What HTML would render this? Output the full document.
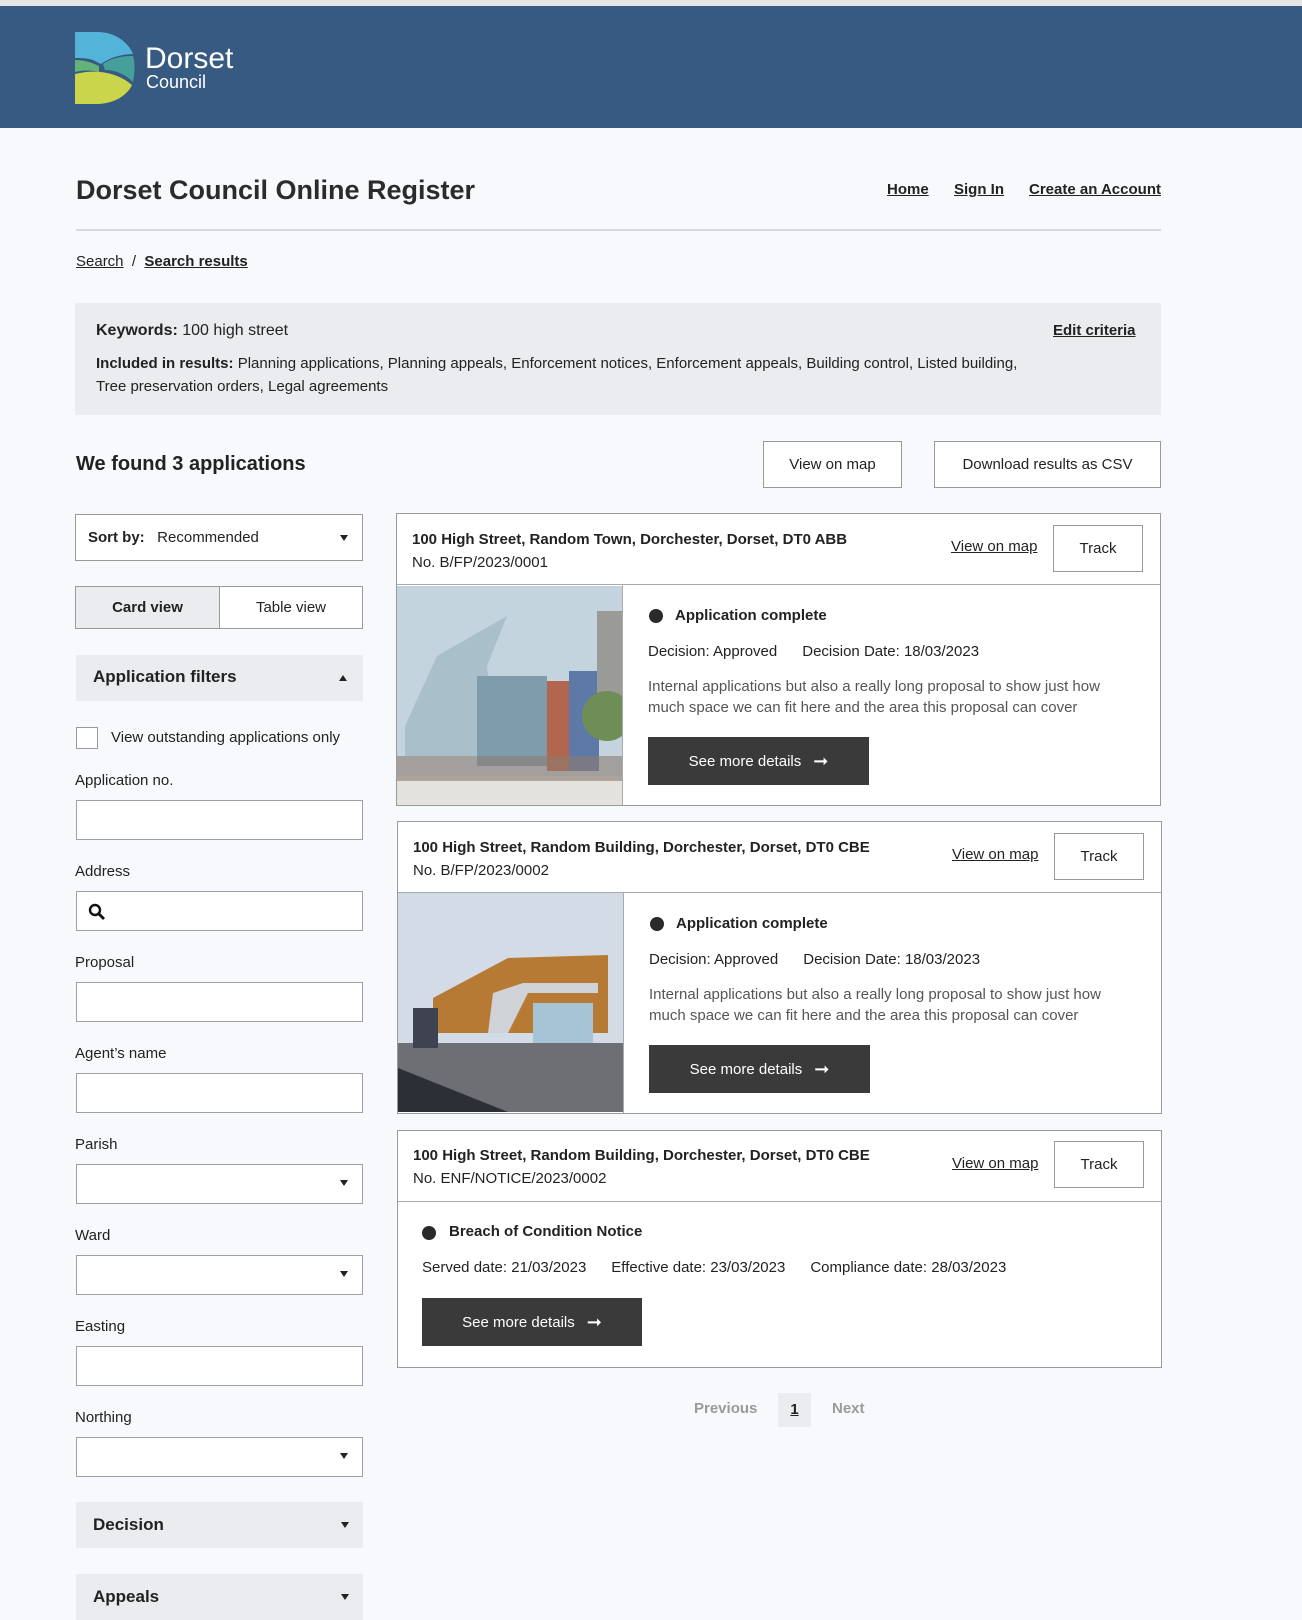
<!DOCTYPE html>
<html><head><meta charset="utf-8"><style>
*{box-sizing:border-box;margin:0;padding:0}
body{width:1302px;height:1604px;overflow:hidden;background:#f8f9fd;font-family:"Liberation Sans",Arial,sans-serif;color:#222;position:relative}
.a{position:absolute}
.t{position:absolute;white-space:nowrap;line-height:20px}
u{text-decoration:underline}
.box{position:absolute;border:1px solid #9a9a9a;background:#fff}
.lbl{position:absolute;left:75px;font-size:15px;line-height:20px;color:#222}
.inp{position:absolute;left:76px;width:287px;height:40px;border:1px solid #a0a0a0;background:#fff}
.arr{position:absolute;right:14px;top:15px;width:0;height:0;border-left:4px solid transparent;border-right:4px solid transparent;border-top:6px solid #222}
.bar{position:absolute;left:76px;width:287px;height:46px;background:#ebecf0}
.btn{position:absolute;background:#3a3a3a;color:#fff;font-size:15px;display:flex;align-items:center;justify-content:center;gap:12px}
.dot{position:absolute;width:14px;height:14px;border-radius:50%;background:#2a2a2a}
.track{position:absolute;border:1px solid #999;background:#fff;font-size:15px;display:flex;align-items:center;justify-content:center}
</style></head><body>
<div class="a" style="left:0;top:0;width:1302px;height:6px;background:#e6e6e6"></div>
<div class="a" style="left:0;top:6px;width:1302px;height:122px;background:#365a82"></div>
<svg class="a" style="left:75px;top:32px" width="62" height="72" viewBox="0 0 62 72">
<path d="M0 0H22C38 0 52 8 58 22C46 22 34 26 26 32L18 28C12 26 6 26 0 26Z" fill="#54b3d9"/>
<path d="M0 28C8 28 16 30 24 34V40C16 38 8 38 0 40Z" fill="#62b27a"/>
<path d="M28 32C36 26 48 24 58 24C60 30 60 40 58 50C50 42 40 38 30 38Z" fill="#45a09a"/>
<path d="M0 42C24 36 44 42 57 53C52 64 38 72 22 72H0Z" fill="#cbd54c"/>
</svg>
<div class="t" style="left:145px;top:43px;font-size:30px;line-height:32px;color:#fff">Dorset</div>
<div class="t" style="left:146px;top:72px;font-size:18px;color:#fff">Council</div>

<div class="t" style="left:76px;top:175px;font-size:27px;line-height:30px;font-weight:bold;color:#2b2b2b">Dorset Council Online Register</div>
<div class="t" style="left:887px;top:180px;font-size:15px;font-weight:bold"><u>Home</u></div>
<div class="t" style="left:954px;top:180px;font-size:15px;font-weight:bold"><u>Sign In</u></div>
<div class="t" style="left:1029px;top:180px;font-size:15px;font-weight:bold"><u>Create an Account</u></div>
<div class="a" style="left:76px;top:229px;width:1085px;height:2px;background:#d8d9dc"></div>
<div class="t" style="left:76px;top:252px;font-size:15px"><u>Search</u> &nbsp;/&nbsp; <b><u>Search results</u></b></div>

<div class="a" style="left:75px;top:303px;width:1086px;height:112px;background:#ebecf0"></div>
<div class="t" style="left:96px;top:321px;font-size:16px"><b>Keywords:</b> 100 high street</div>
<div class="t" style="left:1053px;top:321px;font-size:15px;font-weight:bold"><u>Edit criteria</u></div>
<div class="t" style="left:96px;top:354px;font-size:15px"><b>Included in results:</b> Planning applications, Planning appeals, Enforcement notices, Enforcement appeals, Building control, Listed building,</div>
<div class="t" style="left:96px;top:377px;font-size:15px">Tree preservation orders, Legal agreements</div>

<div class="t" style="left:76px;top:452px;font-size:20px;line-height:24px;font-weight:bold">We found 3 applications</div>
<div class="track" style="left:763px;top:441px;width:139px;height:47px">View on map</div>
<div class="track" style="left:934px;top:441px;width:227px;height:47px">Download results as CSV</div>

<div class="box" style="left:75px;top:514px;width:288px;height:47px"><div class="t" style="left:12px;top:13px;font-size:15px"><b>Sort by:</b>&nbsp;&nbsp; Recommended</div><div class="arr" style="top:20px"></div></div>
<div class="box" style="left:75px;top:586px;width:288px;height:43px;display:flex">
<div style="width:144px;background:#ebecf0;border-right:1px solid #9a9a9a;display:flex;align-items:center;justify-content:center;font-weight:bold;font-size:15px">Card view</div>
<div style="flex:1;display:flex;align-items:center;justify-content:center;font-size:15px">Table view</div></div>
<div class="bar" style="top:655px"><div class="t" style="left:17px;top:12px;font-size:17px;font-weight:bold">Application filters</div>
<div class="a" style="right:16px;top:20px;border-left:4px solid transparent;border-right:4px solid transparent;border-bottom:6px solid #222"></div></div>
<div class="a" style="left:76px;top:727px;width:22px;height:22px;border:1px solid #999;background:#fff"></div>
<div class="t" style="left:111px;top:728px;font-size:15px">View outstanding applications only</div>

<div class="lbl" style="top:771px">Application no.</div><div class="inp" style="top:800px"></div>
<div class="lbl" style="top:862px">Address</div><div class="inp" style="top:891px"><svg class="a" style="left:11px;top:11px" width="18" height="18" viewBox="0 0 18 18"><circle cx="7" cy="7" r="5" fill="none" stroke="#111" stroke-width="2.4"/><path d="M11 11L16 16" stroke="#111" stroke-width="2.8"/></svg></div>
<div class="lbl" style="top:953px">Proposal</div><div class="inp" style="top:982px"></div>
<div class="lbl" style="top:1044px">Agent’s name</div><div class="inp" style="top:1073px"></div>
<div class="lbl" style="top:1135px">Parish</div><div class="inp" style="top:1164px"><div class="arr"></div></div>
<div class="lbl" style="top:1226px">Ward</div><div class="inp" style="top:1255px"><div class="arr"></div></div>
<div class="lbl" style="top:1317px">Easting</div><div class="inp" style="top:1346px"></div>
<div class="lbl" style="top:1408px">Northing</div><div class="inp" style="top:1437px"><div class="arr"></div></div>
<div class="bar" style="top:1502px"><div class="t" style="left:17px;top:13px;font-size:17px;font-weight:bold">Decision</div><div class="arr" style="top:20px"></div></div>
<div class="bar" style="top:1574px"><div class="t" style="left:17px;top:13px;font-size:17px;font-weight:bold">Appeals</div><div class="arr" style="top:20px"></div></div>

<!-- card 1 -->
<div class="box" style="left:396px;top:513px;width:765px;height:293px"></div>
<div class="a" style="left:397px;top:584px;width:763px;height:1px;background:#aaa"></div>
<div class="t" style="left:412px;top:530px;font-size:15px;font-weight:bold">100 High Street, Random Town, Dorchester, Dorset, DT0 ABB</div>
<div class="t" style="left:412px;top:553px;font-size:15px">No. B/FP/2023/0001</div>
<div class="t" style="left:951px;top:537px;font-size:15px"><u>View on map</u></div>
<div class="track" style="left:1053px;top:525px;width:90px;height:47px">Track</div>
<svg class="a" style="left:397px;top:586px" width="225" height="219" viewBox="0 0 225 219">
<rect width="225" height="219" fill="#c3d4de"/><rect y="190" width="225" height="29" fill="#e4e2dc"/>
<path d="M8 140L40 70L110 30L90 80L100 170H8Z" fill="#a9bfca"/>
<rect x="80" y="90" width="70" height="90" fill="#7f9cad"/><rect x="150" y="95" width="22" height="90" fill="#b3664f"/>
<rect x="172" y="85" width="30" height="100" fill="#5d79a8"/><rect x="200" y="25" width="25" height="90" fill="#9a9a96"/>
<circle cx="210" cy="130" r="25" fill="#6f8e56"/><rect x="0" y="170" width="225" height="25" fill="#8c7c70" opacity=".6"/>
</svg>
<div class="a" style="left:622px;top:585px;width:1px;height:220px;background:#aaa"></div>
<div class="dot" style="left:649px;top:609px"></div>
<div class="t" style="left:675px;top:606px;font-size:15px;font-weight:bold">Application complete</div>
<div class="t" style="left:648px;top:642px;font-size:15px">Decision: Approved&nbsp;&nbsp;&nbsp;&nbsp;&nbsp; Decision Date: 18/03/2023</div>
<div class="t" style="left:648px;top:677px;font-size:15px;color:#555">Internal applications but also a really long proposal to show just how</div>
<div class="t" style="left:648px;top:698px;font-size:15px;color:#555">much space we can fit here and the area this proposal can cover</div>
<div class="btn" style="left:648px;top:737px;width:221px;height:48px">See more details <span style="font-size:18px">➞</span></div>

<!-- card 2 -->
<div class="box" style="left:397px;top:821px;width:765px;height:293px"></div>
<div class="a" style="left:398px;top:892px;width:763px;height:1px;background:#aaa"></div>
<div class="t" style="left:413px;top:838px;font-size:15px;font-weight:bold">100 High Street, Random Building, Dorchester, Dorset, DT0 CBE</div>
<div class="t" style="left:413px;top:861px;font-size:15px">No. B/FP/2023/0002</div>
<div class="t" style="left:952px;top:845px;font-size:15px"><u>View on map</u></div>
<div class="track" style="left:1054px;top:833px;width:90px;height:47px">Track</div>
<svg class="a" style="left:398px;top:893px" width="225" height="219" viewBox="0 0 225 219">
<rect width="225" height="219" fill="#d2dbe6"/><rect y="150" width="225" height="69" fill="#6e6f75"/>
<path d="M35 105L110 65L210 62V140H35Z" fill="#b77a34"/><path d="M95 100L125 90L200 90V100H130L110 140H90Z" fill="#cfd2d6"/>
<rect x="15" y="115" width="25" height="40" fill="#3d4350"/><rect x="135" y="110" width="60" height="40" fill="#a7c3d6"/>
<path d="M0 175L110 219H0Z" fill="#2c2f36"/>
</svg>
<div class="a" style="left:623px;top:893px;width:1px;height:220px;background:#aaa"></div>
<div class="dot" style="left:650px;top:917px"></div>
<div class="t" style="left:676px;top:914px;font-size:15px;font-weight:bold">Application complete</div>
<div class="t" style="left:649px;top:950px;font-size:15px">Decision: Approved&nbsp;&nbsp;&nbsp;&nbsp;&nbsp; Decision Date: 18/03/2023</div>
<div class="t" style="left:649px;top:985px;font-size:15px;color:#555">Internal applications but also a really long proposal to show just how</div>
<div class="t" style="left:649px;top:1006px;font-size:15px;color:#555">much space we can fit here and the area this proposal can cover</div>
<div class="btn" style="left:649px;top:1045px;width:221px;height:48px">See more details <span style="font-size:18px">➞</span></div>

<!-- card 3 -->
<div class="box" style="left:397px;top:1130px;width:765px;height:238px"></div>
<div class="a" style="left:398px;top:1201px;width:763px;height:1px;background:#aaa"></div>
<div class="t" style="left:413px;top:1146px;font-size:15px;font-weight:bold">100 High Street, Random Building, Dorchester, Dorset, DT0 CBE</div>
<div class="t" style="left:413px;top:1169px;font-size:15px">No. ENF/NOTICE/2023/0002</div>
<div class="t" style="left:952px;top:1154px;font-size:15px"><u>View on map</u></div>
<div class="track" style="left:1054px;top:1141px;width:90px;height:47px">Track</div>
<div class="dot" style="left:422px;top:1226px"></div>
<div class="t" style="left:449px;top:1222px;font-size:15px;font-weight:bold">Breach of Condition Notice</div>
<div class="t" style="left:422px;top:1258px;font-size:15px">Served date: 21/03/2023&nbsp;&nbsp;&nbsp;&nbsp;&nbsp; Effective date: 23/03/2023&nbsp;&nbsp;&nbsp;&nbsp;&nbsp; Compliance date: 28/03/2023</div>
<div class="btn" style="left:422px;top:1298px;width:220px;height:48px">See more details <span style="font-size:18px">➞</span></div>

<div class="t" style="left:694px;top:1399px;font-size:15px;font-weight:bold;color:#9a9a9a">Previous</div>
<div class="a" style="left:778px;top:1393px;width:33px;height:34px;background:#ebecf0;text-align:center;line-height:34px;font-size:15px;font-weight:bold"><u>1</u></div>
<div class="t" style="left:832px;top:1399px;font-size:15px;font-weight:bold;color:#9a9a9a">Next</div>
</body></html>
